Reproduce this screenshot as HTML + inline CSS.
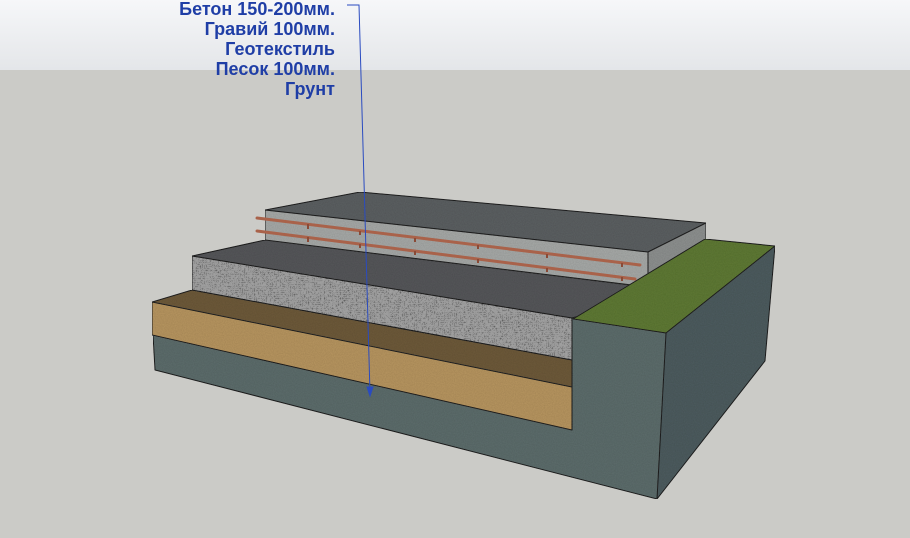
<!DOCTYPE html>
<html><head><meta charset="utf-8"><style>
html,body{margin:0;padding:0;width:910px;height:538px;overflow:hidden;background:#cbcbc7}
.sky{position:absolute;left:0;top:0;width:910px;height:70px;background:linear-gradient(#f6f7f9,#e4e6e9)}
svg{position:absolute;left:0;top:0}
.t{position:absolute;right:575px;top:-1px;text-align:right;font:bold 18px/20px "Liberation Sans",sans-serif;color:#1f3ea6;white-space:nowrap}
</style></head><body>
<div class="sky"></div>
<svg width="910" height="538">
<defs>
<filter id="n" x="0" y="0" width="100%" height="100%"><feTurbulence type="fractalNoise" baseFrequency="0.9" numOctaves="2" seed="3"/><feColorMatrix values="0 0 0 0 0.5 0 0 0 0 0.5 0 0 0 0 0.5 0 0 0 0.5 0"/><feComposite in2="SourceGraphic" operator="in"/><feBlend in="SourceGraphic" mode="multiply"/></filter>
<filter id="g" x="0" y="0" width="100%" height="100%"><feTurbulence type="turbulence" baseFrequency="0.5" numOctaves="2" seed="7"/><feColorMatrix values="0 0 0 0 0.3 0 0 0 0 0.3 0 0 0 0 0.3 0 0 0 1.6 -0.2"/><feComposite in2="SourceGraphic" operator="in"/><feBlend in="SourceGraphic" mode="multiply"/></filter>
</defs>
<g stroke="#1c1c1c" stroke-width="1" stroke-linejoin="round">
<polygon points="153,335 572,430 572,318 666,333 657,499 155,370" fill="#5d6d6c" filter="url(#n)"/>
<polygon points="666,333 775,246 765,361 657,499" fill="#4d5c5f" filter="url(#n)"/>
<polygon points="152,302 192,290 572,360 572,387" fill="#6e5a3a" filter="url(#n)"/>
<polygon points="152,302 572,387 572,430 152,335" fill="#b89660" filter="url(#n)"/>
<polygon points="192,256 265,240 670,290 572,318" fill="#56575a" filter="url(#n)"/>
<polygon points="192,256 572,318 572,360 192,290" fill="#a0a0a0" filter="url(#g)"/>
<polygon points="648,252 706,223 706,245 648,287" fill="#8e9190" filter="url(#n)"/>
<polygon points="265,210 648,252 648,287 265,240" fill="#a7aaa8" filter="url(#n)"/>
<polygon points="265,210 360,192 706,223 648,252" fill="#5c6062" filter="url(#n)"/>
<polygon points="573,319 705,239 775,246 666,333" fill="#5f7a34" filter="url(#n)"/>
</g>
<g stroke="#a9624a" stroke-width="3" stroke-linecap="round">
<line x1="257" y1="218" x2="640" y2="265"/>
<line x1="257" y1="231" x2="635" y2="279"/>
</g>
<g stroke="#8a4a36" stroke-width="2">
<line x1="308" y1="224" x2="308" y2="229"/><line x1="360" y1="231" x2="360" y2="235"/><line x1="415" y1="238" x2="415" y2="242"/><line x1="478" y1="245" x2="478" y2="249"/><line x1="547" y1="254" x2="547" y2="258"/><line x1="622" y1="263" x2="622" y2="267"/>
<line x1="308" y1="237" x2="308" y2="242"/><line x1="360" y1="244" x2="360" y2="248"/><line x1="415" y1="251" x2="415" y2="255"/><line x1="478" y1="259" x2="478" y2="263"/><line x1="547" y1="268" x2="547" y2="272"/><line x1="622" y1="277" x2="622" y2="281"/>
</g>
<g stroke="#2a4bc0" stroke-width="1" fill="none">
<polyline points="347,5 359,5 370,393"/>
<polygon points="367,387 373,387 370,396" fill="#2a4bc0"/>
</g>
</svg>
<div class="t">Бетон 150-200мм.<br>Гравий 100мм.<br>Геотекстиль<br>Песок 100мм.<br>Грунт</div>
</body></html>
